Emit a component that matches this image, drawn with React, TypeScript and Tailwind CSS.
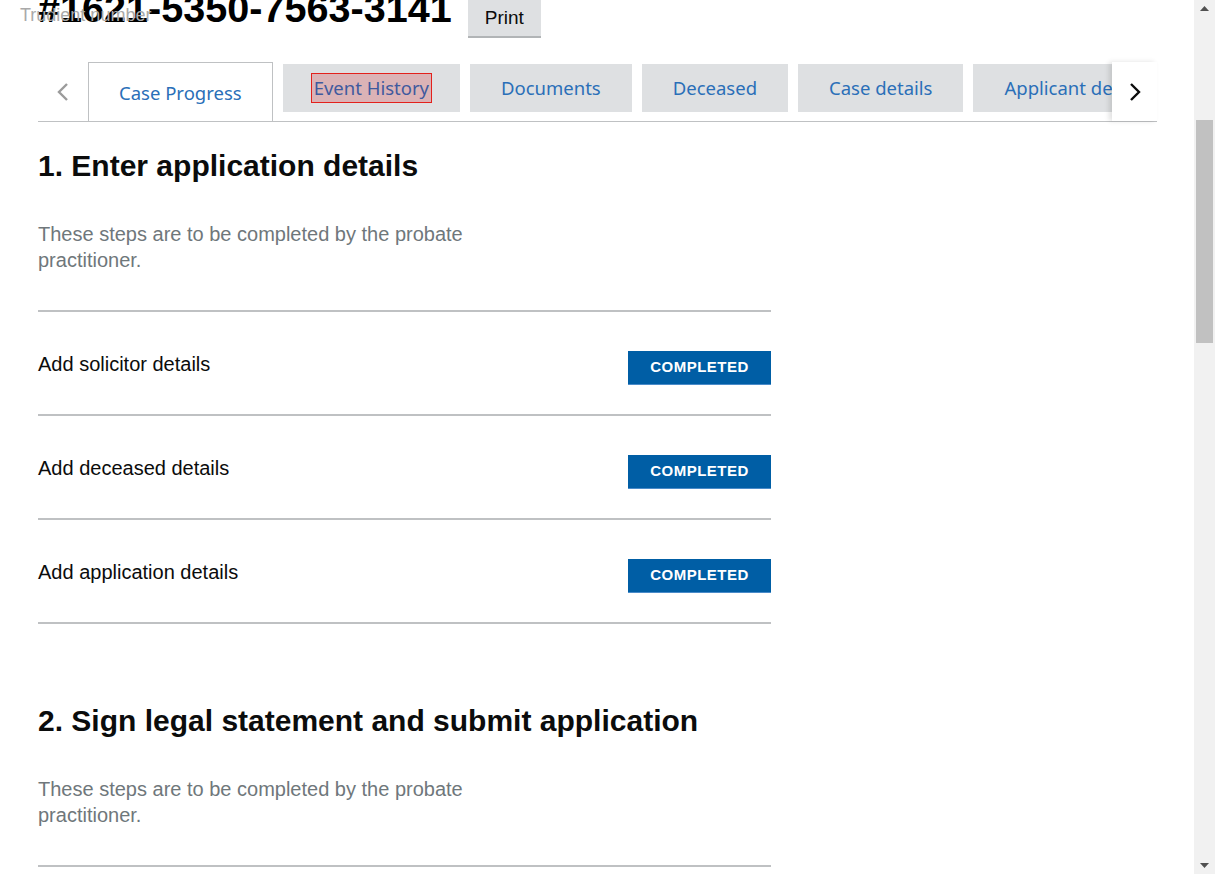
import React from "react";

const tabs = ["Event History", "Documents", "Deceased", "Case details", "Applicant details", "Will"];

function Row({ label }: { label: string }) {
  return (
    <div className="flex items-start justify-between border-b-2 border-[#bfc1c3] pt-[39px] pb-[29px]">
      <span className="text-[20px] leading-[26px] text-[#0b0c0c]">{label}</span>
      <span className="flex h-[34px] w-[143px] items-center justify-center border-b border-[#4a8bc9] bg-[#005ea5] text-[15px] font-bold tracking-[0.5px] text-white">
        COMPLETED
      </span>
    </div>
  );
}

function Section({ title, rows, first }: { title: string; rows: string[]; first?: boolean }) {
  return (
    <section className={first ? "mt-[25px]" : "mt-[78px]"}>
      <h2 className="text-[30px] font-bold leading-[37px] text-[#0b0c0c]">{title}</h2>
      <p className="mt-[37px] max-w-[480px] text-[20px] leading-[26px] text-[#6f777b]">
        These steps are to be completed by the probate practitioner.
      </p>
      <div className="mt-[37px] w-[733px] border-t-2 border-[#bfc1c3]">
        {rows.map((r) => (
          <Row key={r} label={r} />
        ))}
      </div>
    </section>
  );
}

export default function App() {
  return (
    <div className="flex h-[874px] w-[1215px] overflow-hidden bg-white font-['Liberation_Sans',Arial,sans-serif]">
      <main className="relative flex-1 overflow-hidden pl-[38px] pr-[37px]">
        <div className="absolute left-[20px] top-[5px] z-10 text-[18px] leading-[20px] text-[#a9a9a9]">
          Trudient number
        </div>
        <header className="flex items-start gap-[16px]">
          <h1 className="-mt-[12px] text-[39.6px] font-bold leading-[40px] text-black">#1621-5350-7563-3141</h1>
          <button className="flex h-[38px] items-center border-b-2 border-[#b1b4b6] bg-[#dee0e2] px-[17px] text-[19px] text-[#0b0c0c]">
            Print
          </button>
        </header>

        <nav className="mt-[24px] flex h-[60px] items-start border-b border-[#bfc1c3] font-['Noto_Sans',sans-serif]">
          <div className="flex h-[59px] w-[50px] shrink-0 items-center justify-center">
            <svg width="14" height="20" viewBox="0 0 14 20" fill="none">
              <polyline points="11,2 3,10 11,18" stroke="#9b9b9b" strokeWidth="2.4" />
            </svg>
          </div>
          <div className="flex min-w-0 flex-1 items-start gap-[10px] overflow-hidden">
            <div className="relative z-10 -mb-px flex h-[60px] shrink-0 items-center border border-b-0 border-[#bfc1c3] bg-white px-[30px] text-[18.5px] text-[#2a6fb8]">
              Case Progress
            </div>
            {tabs.map((t) => (
              <div
                key={t}
                className="mt-[2px] flex h-[48px] shrink-0 items-center whitespace-nowrap bg-[#dee0e2] px-[31px] text-[18.5px] text-[#2a6fb8]"
              >
                {t === "Event History" ? (
                  <span className="-mx-[2px] bg-[#dbb3b6] px-[2px] text-[#3f5a9e] outline outline-1 outline-[#e3211c]">
                    {t}
                  </span>
                ) : (
                  t
                )}
              </div>
            ))}
          </div>
          <div className="relative z-10 flex h-[59px] w-[45px] shrink-0 items-center justify-center bg-white shadow-[-3px_0_5px_rgba(0,0,0,0.12)]">
            <svg width="14" height="20" viewBox="0 0 14 20" fill="none">
              <polyline points="3,2 11,10 3,18" stroke="#0b0c0c" strokeWidth="2.4" />
            </svg>
          </div>
        </nav>

        <Section
          first
          title="1. Enter application details"
          rows={["Add solicitor details", "Add deceased details", "Add application details"]}
        />
        <Section
          title="2. Sign legal statement and submit application"
          rows={["Review and sign legal statement and submit application"]}
        />
      </main>

      <aside className="flex w-[21px] shrink-0 flex-col items-center bg-[#f1f1f1]">
        <div className="flex h-[17px] w-full items-center justify-center">
          <svg width="9" height="5" viewBox="0 0 9 5">
            <polygon points="0,5 4.5,0 9,5" fill="#505050" />
          </svg>
        </div>
        <div className="mt-[103px] h-[223px] w-[17px] bg-[#c1c1c1]" />
        <div className="flex-1" />
        <div className="flex h-[17px] w-full items-center justify-center">
          <svg width="9" height="5" viewBox="0 0 9 5">
            <polygon points="0,0 9,0 4.5,5" fill="#505050" />
          </svg>
        </div>
      </aside>
    </div>
  );
}
